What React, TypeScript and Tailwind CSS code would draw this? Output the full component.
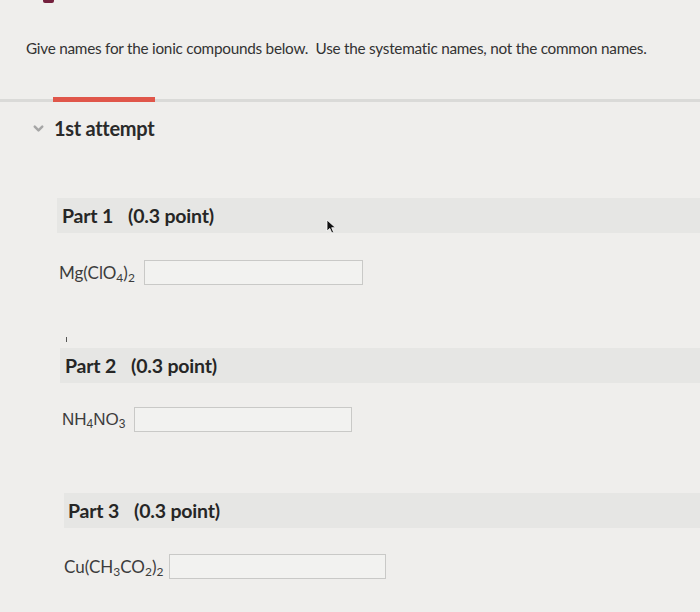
import { ChevronDown } from "lucide-react";

interface PartProps {
    index: number;
    points: string;
    formula: React.ReactNode;
    formulaFont?: string;
    bandInset: string;
    labelInset: string;
    rowInset: string;
    rowGap: string;
    inputWidth: string;
    bandTop: string;
    rowTop: string;
}

function Part({ index, points, formula, formulaFont, bandInset, labelInset, rowInset, rowGap, inputWidth, bandTop, rowTop }: PartProps) {
    return (
        <>
            {/* Part header band */}
            <div className={`${bandTop} ${bandInset} h-[35px]`}>
                <div className={`h-full bg-[#e6e6e4] flex items-center ${labelInset}`}>
                    <span className="text-[19.5px] font-bold text-[#262626] tracking-[-0.2px]">
                        Part {index}
                    </span>
                    <span className="text-[19.5px] font-bold text-[#262626] ml-[15px] tracking-[-0.2px]">
                        ({points} point)
                    </span>
                </div>
            </div>

            {/* Formula + answer box */}
            <div className={`${rowTop} ${rowInset} ${rowGap} flex items-center h-[25px]`}>
                <span
                    className="text-[17px] text-[#3c3c3c] leading-none"
                    style={formulaFont ? { fontFamily: formulaFont } : undefined}
                >
                    {formula}
                </span>
                <div className={`${inputWidth} h-[25px] border border-[#c9c9c7] bg-[#f2f2f0]`} />
            </div>
        </>
    );
}

export default function App() {
    return (
        <div
            className="relative w-[700px] h-[612px] overflow-hidden bg-[#efeeec] flex flex-col"
            style={{ fontFamily: "Lato, 'Open Sans', sans-serif" }}
        >
            {/* Cut-off logo mark at top */}
            <div className="h-[3px] pl-[43px]">
                <div className="w-[11px] h-[3px] bg-[#74203d] rounded-b-[2px]" />
            </div>

            <p className="mt-[35px] pl-[26px] text-[15.3px] leading-[20px] text-[#333] tracking-[-0.25px] whitespace-nowrap">
                Give names for the ionic compounds below.&nbsp; Use the systematic names, not the common names.
            </p>

            {/* Progress bar */}
            <div className="mt-[39px] h-[5px] flex items-end">
                <div className="w-[53px] h-[3px] bg-[#dadad8]" />
                <div className="w-[102px] h-[5px] bg-[#e0564a]" />
                <div className="flex-1 h-[3px] bg-[#dadad8]" />
            </div>

            {/* Attempt header */}
            <div className="mt-[14px] h-[24px] flex items-center pl-[31px]">
                <ChevronDown className="w-[15px] h-[15px] text-[#a6a6a6]" strokeWidth={4} />
                <span className="ml-[8px] text-[20px] font-bold text-[#2a2a2a] tracking-[-0.3px]">
                    1st attempt
                </span>
            </div>

            <Part
                index={1}
                points="0.3"
                bandTop="mt-[58px]"
                bandInset="pl-[57px]"
                labelInset="pl-[5px]"
                rowTop="mt-[27px]"
                rowInset="pl-[59px]"
                rowGap="gap-[9px]"
                inputWidth="w-[219px]"
                formula={
                    <>
                        Mg(ClO<sub className="text-[12px]">4</sub>)<sub className="text-[12px]">2</sub>
                    </>
                }
            />

            <Part
                index={2}
                points="0.3"
                bandTop="mt-[63px]"
                bandInset="pl-[60px]"
                labelInset="pl-[5px]"
                rowTop="mt-[24px]"
                rowInset="pl-[62px]"
                rowGap="gap-[9px]"
                inputWidth="w-[218px]"
                formulaFont="'Liberation Sans', Arial, sans-serif"
                formula={
                    <>
                        NH<sub className="text-[12px]">4</sub>NO<sub className="text-[12px]">3</sub>
                    </>
                }
            />

            <Part
                index={3}
                points="0.3"
                bandTop="mt-[61px]"
                bandInset="pl-[64px]"
                labelInset="pl-[4px]"
                rowTop="mt-[26px]"
                rowInset="pl-[64px]"
                rowGap="gap-[6px]"
                inputWidth="w-[217px]"
                formula={
                    <>
                        Cu(CH<sub className="text-[12px]">3</sub>CO<sub className="text-[12px]">2</sub>)<sub className="text-[12px]">2</sub>
                    </>
                }
            />

            {/* Mouse pointer over the page */}
            <svg className="absolute left-[326px] top-[219px]" width="11" height="15" viewBox="0 0 11 15">
                <path d="M1 1 L1 12 L3.8 9.4 L5.8 14 L7.6 13.2 L5.7 8.7 L9.5 8.7 Z" fill="#111" stroke="#fff" strokeWidth="0.8" />
            </svg>

            {/* Stray tick mark */}
            <div className="absolute left-[66px] top-[337px] w-[1px] h-[5px] bg-[#555]" />
        </div>
    );
}
